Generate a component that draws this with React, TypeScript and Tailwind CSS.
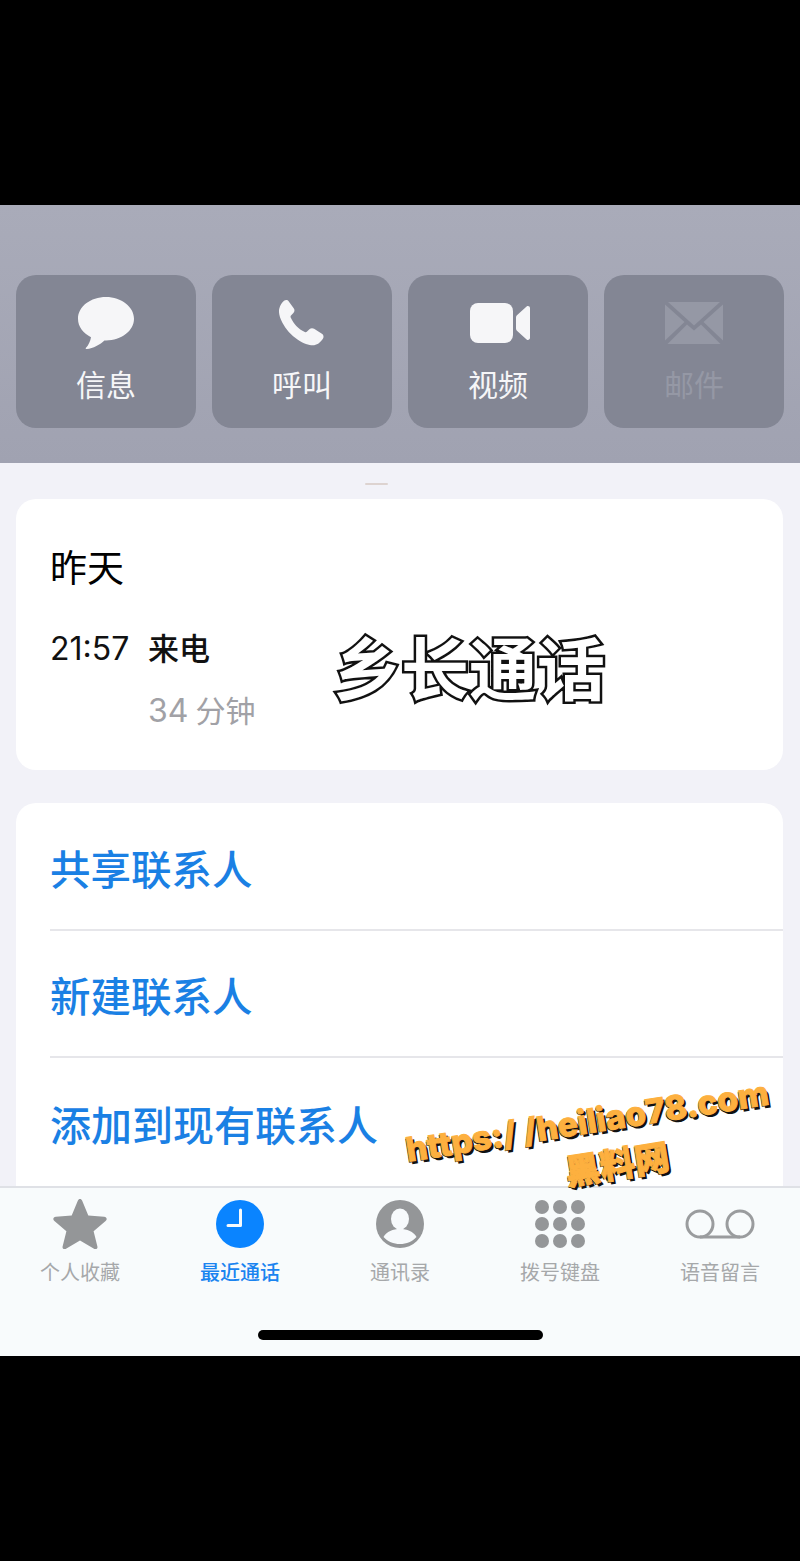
const sans = "font-['Inter','Noto_Sans_CJK_SC',sans-serif]";

function MessageIcon() {
  return (
    <svg width="56" height="52" viewBox="0 0 56 52" fill="currentColor">
      <path d="M28 0C12.600 0 0 9.600 0 21.800c0 7.900 5.200 14.600 13 18.400-.6 3.900-2.600 8-5 10.600-.7.800-.1 1.500.8 1.200 6.200-.8 13.600-4.400 17.600-8.600.5 0 1 .1 1.600.1 15.400 0 28-9.700 28-21.700S43.400 0 28 0z" />
    </svg>
  );
}

function PhoneIcon() {
  return (
    <svg width="46" height="46" viewBox="0 0 46 46" fill="currentColor">
      <path d="M5 .8C6.600-.3 8.600-.2 9.800 1.400l4.900 6.800c1.100 1.500 1 3.500-.3 4.800l-2.400 2.500c-.5.500-.6 1.300-.3 2 1.500 3.300 3.300 6 5.600 8.500 2.500 2.500 5.300 4.500 8.500 6 .7.300 1.500.2 2-.3l2.600-2.500c1.300-1.200 3.200-1.400 4.700-.4l7.800 5c1.700 1.100 2.100 3.300 1 5-1.800 2.800-4.800 5.900-8.700 6.400-3.900.5-9.800-1.100-16.700-5.800C12 35.200 6.800 29.200 3.400 22.800.3 17-.7 11.900.4 8.200 1.200 5.300 2.900 2.400 5 .8z" />
    </svg>
  );
}

function VideoIcon() {
  return (
    <svg className="ml-1" width="60" height="40" viewBox="0 0 60 40" fill="currentColor">
      <rect x="0" y="0" width="43" height="40" rx="8" />
      <path d="M46 14.500c0-1 .4-1.900 1.200-2.500l9.400-8.400C58 2.500 60 3.300 60 5.200v29.600c0 1.900-2 2.700-3.400 1.600L47.200 28c-.8-.6-1.200-1.500-1.200-2.500z" />
    </svg>
  );
}

function MailIcon() {
  return (
    <svg width="58" height="42" viewBox="0 0 58 42" fill="currentColor">
      <path d="M3 0h52L29 23.500z" />
      <path d="M0 2.500v36L19.500 20z" />
      <path d="M58 2.500v36L38.500 20z" />
      <path d="M2.500 42h53L36 22.500l-7 6-7-6z" />
    </svg>
  );
}

function StarIcon() {
  return (
    <svg width="54" height="50" viewBox="0 0 54 50" fill="#949698">
      <path d="M27 0c1 0 1.700.6 2.200 1.800l6.100 14.700 15.800 1.200c2.600.2 3.500 2.500 1.500 4.200L40.600 32.200l3.800 15.200c.6 2.300-1.400 3.600-3.400 2.300L27 41.400 13 49.700c-2 1.300-4 0-3.400-2.300l3.800-15.200L1.400 21.900c-2-1.700-1.100-4 1.500-4.200l15.800-1.200 6.100-14.700C25.300.6 26 0 27 0z" />
    </svg>
  );
}

function ClockIcon() {
  return (
    <svg width="48" height="48" viewBox="0 0 48 48">
      <circle cx="24" cy="24" r="24" fill="#0a84ff" />
      <path d="M24.500 10v15.500H12" fill="none" stroke="#f7fafc" strokeWidth="3" strokeLinecap="round" strokeLinejoin="round" />
    </svg>
  );
}

function PersonIcon() {
  return (
    <svg width="48" height="48" viewBox="0 0 48 48">
      <circle cx="24" cy="24" r="24" fill="#949698" />
      <ellipse cx="24" cy="19" rx="9" ry="10.500" fill="#f7fafc" />
      <path d="M7.500 37c3-5.500 9.500-8 16.500-8s13.500 2.500 16.500 8C36.500 41.500 30.500 44 24 44S11.500 41.500 7.500 37z" fill="#f7fafc" />
    </svg>
  );
}

function KeypadIcon() {
  const rows = [7, 24, 41];
  const cols = [7, 25, 43];
  return (
    <svg width="50" height="48" viewBox="0 0 50 48" fill="#949698">
      {rows.map((cy) =>
        cols.map((cx) => <circle key={`${cx}-${cy}`} cx={cx} cy={cy} r="7" />),
      )}
    </svg>
  );
}

function VoicemailIcon() {
  return (
    <svg width="70" height="30" viewBox="0 0 70 30" fill="none" stroke="#9a9c9e" strokeWidth="3">
      <circle cx="15" cy="15" r="13" />
      <circle cx="55" cy="15" r="13" />
      <path d="M15 28h40" />
    </svg>
  );
}

const actions = [
  { label: "信息", icon: <MessageIcon />, dim: false },
  { label: "呼叫", icon: <PhoneIcon />, dim: false },
  { label: "视频", icon: <VideoIcon />, dim: false },
  { label: "邮件", icon: <MailIcon />, dim: true },
];

const tabs = [
  { label: "个人收藏", icon: <StarIcon />, active: false },
  { label: "最近通话", icon: <ClockIcon />, active: true },
  { label: "通讯录", icon: <PersonIcon />, active: false },
  { label: "拨号键盘", icon: <KeypadIcon />, active: false },
  { label: "语音留言", icon: <VoicemailIcon />, active: false },
];

export default function App() {
  return (
    <div className={`relative flex h-[1561px] w-[800px] flex-col overflow-hidden bg-black ${sans}`}>
      <div className="h-[205px] shrink-0" />

      {/* contact header */}
      <div className="h-[258px] shrink-0 bg-gradient-to-b from-[#a9abb9] to-[#a0a2b1] px-4 pt-[70px]">
        <div className="grid grid-cols-4 gap-4">
          {actions.map((a) => (
            <div
              key={a.label}
              className={`flex h-[153px] flex-col items-center rounded-[20px] bg-[#838694] pt-[22px] ${a.dim ? "text-[#9598a5]" : "text-[#f6f6f8]"}`}
            >
              <div className="flex h-[52px] items-center justify-center">{a.icon}</div>
              <span className="mt-[16px] text-[30px] leading-[40px]">{a.label}</span>
            </div>
          ))}
        </div>
      </div>

      {/* sheet */}
      <div className="relative flex h-[723px] shrink-0 flex-col gap-[33px] overflow-hidden bg-[#f2f2f8] pl-4 pr-[17px] pt-9">
        <div className="h-[271px] shrink-0 rounded-[20px] bg-white pl-[34px] pt-[44px]">
          <div className="text-[37px] leading-[52px] text-black">昨天</div>
          <div className="mt-[32px] flex items-center">
            <span className="w-[98px] text-[32px] leading-[44px] text-[#111]">21:57</span>
            <span className="text-[31px] font-medium leading-[44px] text-[#111]">来电</span>
          </div>
          <div className="ml-[98px] mt-[18px] flex items-center leading-[44px] text-[#a1a1a6]">
            <span className="text-[32px]">34</span>
            <span className="ml-[7px] text-[30px]">分钟</span>
          </div>
        </div>

        <div className="h-[400px] shrink-0 rounded-t-[20px] bg-white pl-[34px] text-[40.500px] font-medium text-[#1a80e4]">
          <div className="flex h-[128px] items-center border-b-2 border-[#e6e6ea] pt-[10px]">共享联系人</div>
          <div className="flex h-[127px] items-center border-b-2 border-[#e6e6ea] pt-[10px]">新建联系人</div>
          <div className="flex h-[127px] items-center pt-[10px] text-[41px]">添加到现有联系人</div>
        </div>
        <div className="absolute left-[365px] top-[20px] h-[2px] w-[23px] rounded-full bg-[#ddd3d0]" />
      </div>

      {/* tab bar */}
      <div className="relative flex h-[170px] shrink-0 flex-col border-t-2 border-[#dfe1e6] bg-[#f8fbfc]">
        <div className="grid grid-cols-5">
          {tabs.map((t) => (
            <div key={t.label} className="flex flex-col items-center pt-[10px]">
              <div className="flex h-[52px] items-center justify-center">{t.icon}</div>
              <span className={`mt-[8px] text-[20px] leading-[30px] ${t.active ? "font-medium text-[#1a84f0]" : "text-[#a6a8aa]"}`}>
                {t.label}
              </span>
            </div>
          ))}
        </div>
        <div className="absolute left-[258px] top-[142px] h-[10px] w-[285px] rounded-full bg-black" />
      </div>

      <div className="flex-1" />

      {/* watermarks */}
      <div className="absolute left-[333px] top-[622px] text-[68px] font-bold leading-[96px] text-white [-webkit-text-stroke:5px_#111] [paint-order:stroke_fill]">
        乡长通话
      </div>
      <div className="absolute left-[406px] top-[1098px] flex w-[370px] -rotate-[9deg] flex-col items-center text-[33.500px] font-extrabold leading-[47px] text-[#fdb03f] [-webkit-text-stroke:1px_#fdb03f] [text-shadow:2px_3px_0_#111,-1px_1px_0_#111]">
        <span className="whitespace-nowrap">https:/ /heiliao78.com</span>
        <span className="ml-[46px] text-[35px]">黑料网</span>
      </div>
    </div>
  );
}
